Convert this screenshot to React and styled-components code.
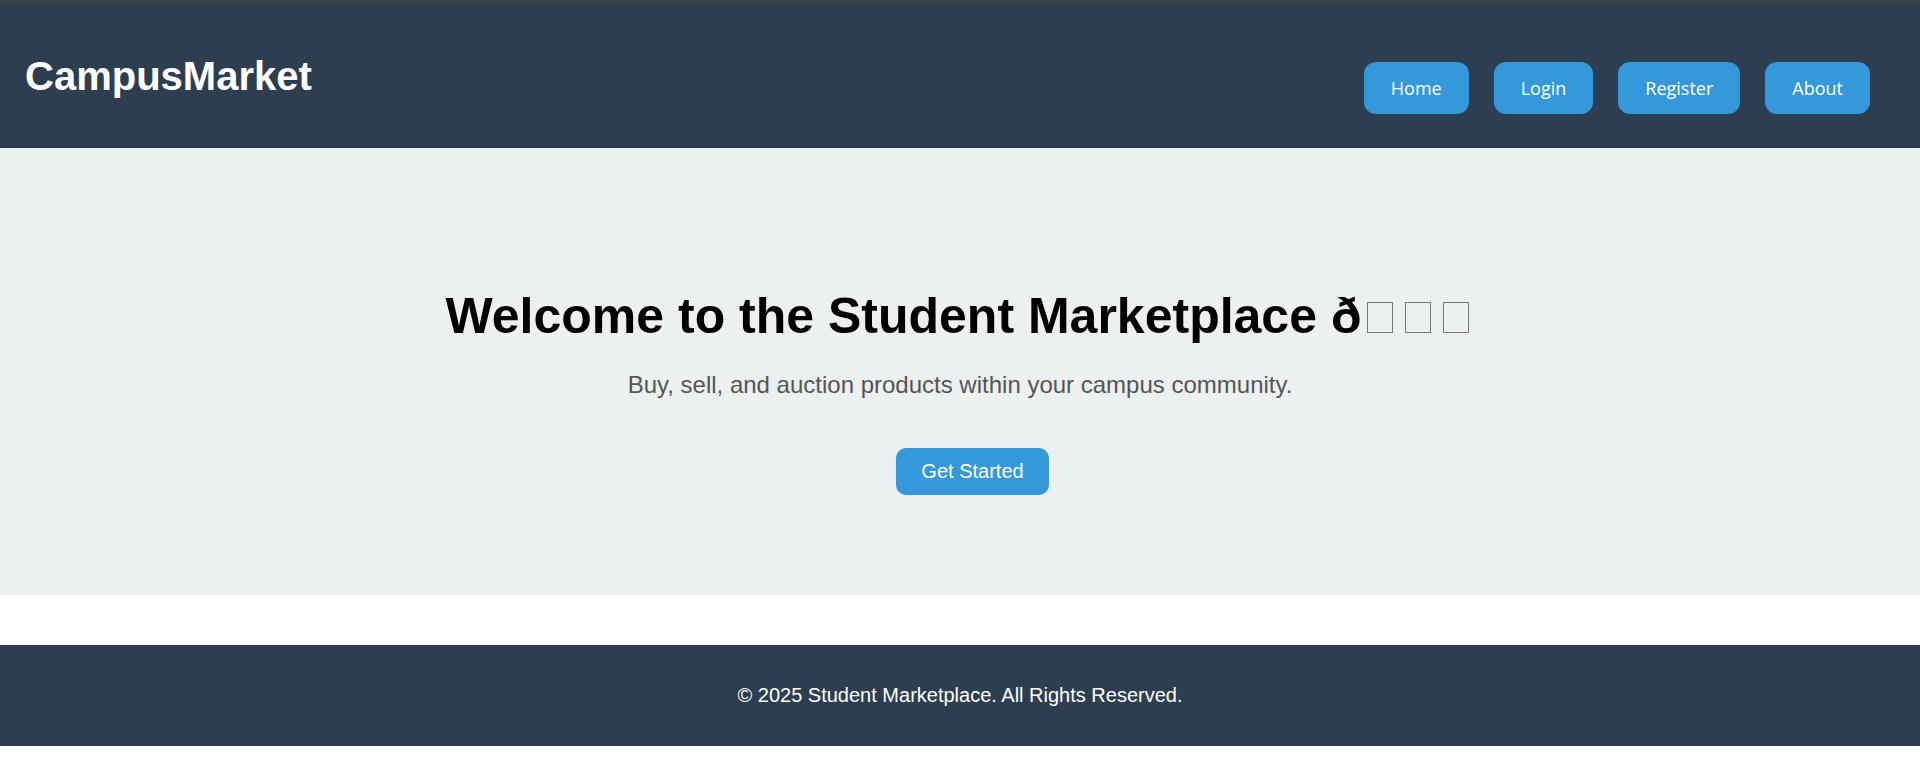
import styled, { createGlobalStyle } from "styled-components";

const GlobalStyle = createGlobalStyle`
    html, body {
        margin: 0;
        padding: 0;
        background: #ffffff;
        font-family: "Liberation Sans", Arial, sans-serif;
    }
`;

const Header = styled.header`
    display: flex;
    align-items: flex-start;
    justify-content: space-between;
    background-color: #2c3e50;
    border-top: 3px solid #3c3f43;
    padding: 50px 50px 34px 25px;

    > h1 {
        color: #ffffff;
        font-size: 40px;
        font-weight: 700;
        line-height: 46px;
        margin: 0;
    }
`;

const Nav = styled.nav`
    display: flex;
    gap: 25px;
    margin-top: 9px;
`;

const NavButton = styled.a`
    background-color: #3498db;
    border-radius: 12px;
    color: #ffffff;
    font-family: "Open Sans", "Noto Sans", sans-serif;
    font-size: 18px;
    line-height: 26px;
    padding: 13px 27px;
    text-decoration: none;
`;

const Hero = styled.section`
    display: flex;
    flex-direction: column;
    align-items: center;
    background-color: #ecf0f1;
    padding: 140px 20px 100px;
    margin-bottom: 50px;
    text-align: center;

    > h2 {
        color: #000000;
        font-size: 50px;
        font-weight: 700;
        line-height: 57.5px;
        margin: 0 0 25px 0;
    }

    > p {
        color: #555555;
        font-size: 24px;
        line-height: 27.6px;
        margin: 0 0 50px 0;
    }
`;

const Tofu = styled.span`
    display: inline-block;
    width: 26px;
    height: 31px;
    margin: 0 5.85px;
    border: 1px solid #777777;
    box-sizing: border-box;
    vertical-align: baseline;
`;

const StartButton = styled.a`
    background-color: #3498db;
    border-radius: 10px;
    color: #ffffff;
    font-size: 20px;
    line-height: 23px;
    margin-left: 25px;
    padding: 12px 25px;
    text-decoration: none;
`;

const Footer = styled.footer`
    background-color: #2c3e50;
    color: #ffffff;
    padding: 39px 20px;
    text-align: center;

    > p {
        font-size: 20px;
        line-height: 23px;
        margin: 0;
    }
`;

const App = () => {
    return (
        <>
            <GlobalStyle />
            <Header>
                <h1>CampusMarket</h1>
                <Nav>
                    <NavButton href="##">Home</NavButton>
                    <NavButton href="##">Login</NavButton>
                    <NavButton href="##">Register</NavButton>
                    <NavButton href="##">About</NavButton>
                </Nav>
            </Header>
            <Hero>
                <h2>
                    Welcome to the Student Marketplace ð
                    <Tofu aria-hidden="true" />
                    <Tofu aria-hidden="true" />
                    <Tofu aria-hidden="true" />
                </h2>
                <p>Buy, sell, and auction products within your campus community.</p>
                <StartButton href="##">Get Started</StartButton>
            </Hero>
            <Footer>
                <p>© 2025 Student Marketplace. All Rights Reserved.</p>
            </Footer>
        </>
    );
};

export default App;
